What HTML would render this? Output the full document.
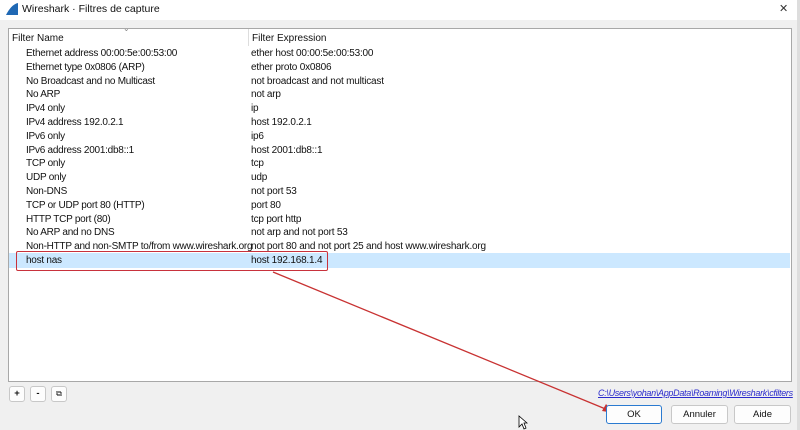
<!DOCTYPE html><html><head><style>
body{margin:0;width:800px;height:430px;background:#f0f0f0;font-family:"Liberation Sans",sans-serif;font-size:10px;color:#111;position:relative;overflow:hidden}
.t{position:absolute;white-space:nowrap}
.box{position:absolute;left:8px;top:28px;width:782px;height:352px;background:#fff;border:1px solid #a8a8a8}
.btn{position:absolute;background:#fdfdfd;border:1px solid #c8c8c8;border-radius:3px;text-align:center;font-size:9.5px}
</style></head><body>
<div style="position:absolute;left:0;top:0;width:800px;height:20px;background:#fff"></div>
<svg style="position:absolute;left:5px;top:2px" width="14" height="14"><path d="M1 13 L13 13 L13 1 C8 2 4 7 1 13Z" fill="#1f68b4"/></svg>
<div class="t" style="left:22px;top:3px;font-size:10.5px">Wireshark · Filtres de capture</div>
<div class="t" style="left:779px;top:2px;font-size:11px;color:#333">✕</div>
<div style="position:absolute;right:0;top:0;width:3px;height:430px;background:#ddd"></div>
<div class="box"></div>
<div style="position:absolute;left:248px;top:29px;width:1px;height:17px;background:#ddd"></div>
<div class="t" style="left:12px;top:33px">Filter Name</div>
<div class="t" style="left:252px;top:33px">Filter Expression</div>
<div class="t" style="left:123px;top:24px;font-size:8px;color:#888">⌄</div>
<div style="position:absolute;left:9px;top:253px;width:781px;height:15px;background:#cce8ff"></div>
<div id="rows"></div>
<div style="position:absolute;left:16px;top:251px;width:310px;height:18px;border:1.5px solid #c8323c;border-radius:2px"></div>
<svg style="position:absolute;left:0;top:0" width="800" height="430"><line x1="273" y1="272" x2="608" y2="410" stroke="#c83232" stroke-width="1.3"/><polygon points="614,413 602,411 606,404" fill="#c83232"/></svg>
<div class="btn" style="left:9px;top:386px;width:14px;height:14px;line-height:14px;font-weight:bold">+</div>
<div class="btn" style="left:30px;top:386px;width:14px;height:14px;line-height:14px;font-weight:bold">-</div>
<div class="btn" style="left:51px;top:386px;width:14px;height:14px;line-height:14px;font-size:8px">⧉</div>
<div class="t" style="left:598px;top:388px;font-size:9px;color:#2a2acc;text-decoration:underline;font-style:italic;letter-spacing:-0.3px">C:\Users\yohan\AppData\Roaming\Wireshark\cfilters</div>
<div class="btn" style="left:606px;top:405px;width:54px;height:17px;line-height:17px;border-color:#2a7ad0">OK</div>
<div class="btn" style="left:671px;top:405px;width:55px;height:17px;line-height:17px">Annuler</div>
<div class="btn" style="left:734px;top:405px;width:55px;height:17px;line-height:17px">Aide</div>
<svg style="position:absolute;left:518px;top:415px" width="10" height="15"><path d="M1 1 L1 12 L4 9 L6 14 L8 13 L6 8 L9 8Z" fill="#fff" stroke="#000" stroke-width="0.8"/></svg>
<script>
var d=[["Ethernet address 00:00:5e:00:53:00","ether host 00:00:5e:00:53:00"],["Ethernet type 0x0806 (ARP)","ether proto 0x0806"],["No Broadcast and no Multicast","not broadcast and not multicast"],["No ARP","not arp"],["IPv4 only","ip"],["IPv4 address 192.0.2.1","host 192.0.2.1"],["IPv6 only","ip6"],["IPv6 address 2001:db8::1","host 2001:db8::1"],["TCP only","tcp"],["UDP only","udp"],["Non-DNS","not port 53"],["TCP or UDP port 80 (HTTP)","port 80"],["HTTP TCP port (80)","tcp port http"],["No ARP and no DNS","not arp and not port 53"],["Non-HTTP and non-SMTP to/from www.wireshark.org","not port 80 and not port 25 and host www.wireshark.org"],["host nas","host 192.168.1.4"]],h="";
d.forEach(function(r,i){var y=48+i*13.8;h+='<div class="t" style="left:26px;top:'+y+'px;letter-spacing:-0.25px">'+r[0]+'</div><div class="t" style="left:251px;top:'+y+'px;letter-spacing:-0.2px">'+r[1]+'</div>'});
document.getElementById("rows").innerHTML=h;
</script>
</body></html>
